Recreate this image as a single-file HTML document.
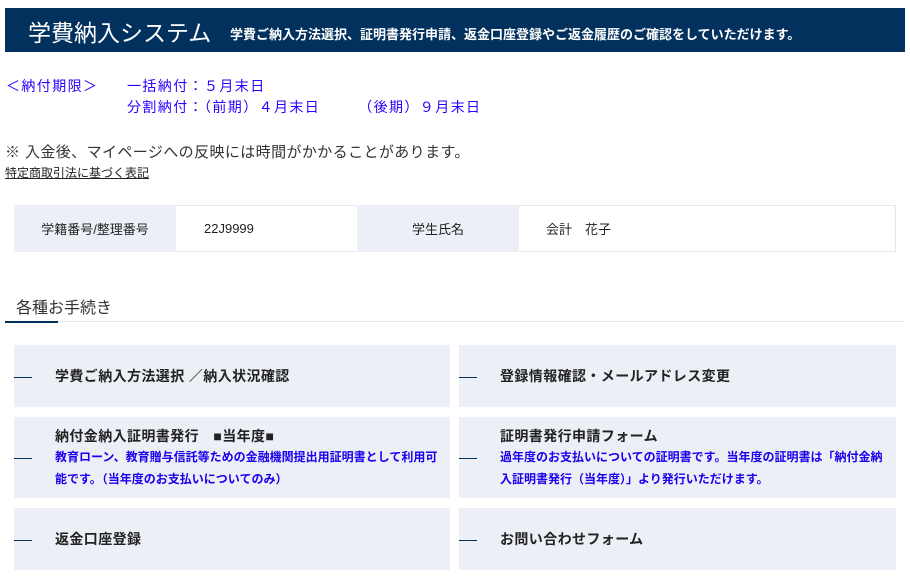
<!DOCTYPE html>
<html><head><meta charset="utf-8"><style>
*{margin:0;padding:0;box-sizing:border-box}
body{width:910px;height:588px;background:#fff;font-family:"Liberation Sans","Noto Sans CJK JP",sans-serif;position:relative;overflow:hidden;color:#222}
.a{position:absolute;white-space:nowrap}
.hdr{left:5px;top:8px;width:900px;height:44px;background:#03315e;color:#fff}
.blue{color:#2a00ff;font-size:14px;letter-spacing:1.4px}
.cell{position:absolute;top:205px;height:47px;font-size:13px;display:flex;align-items:center}
.lab{background:#ecf0f6;justify-content:center}
.card{position:absolute;background:#ecf0f6}
.dash{position:absolute;left:0;width:18px;height:1px;background:#03315e}
.t{position:absolute;left:41px;font-size:14px;font-weight:bold;color:#222;white-space:nowrap;letter-spacing:0.4px}
.d{position:absolute;left:41px;font-size:12px;font-weight:bold;color:#1a00ee;line-height:22px;width:390px}
</style></head><body>
<div class="a hdr"><span class="a" style="left:23px;top:6px;font-size:23px">学費納入システム</span><span class="a" style="left:225px;top:16px;font-size:13px;font-weight:bold">学費ご納入方法選択、証明書発行申請、返金口座登録やご返金履歴のご確認をしていただけます。</span></div>
<div class="a blue" style="left:6px;top:76px">＜納付期限＞</div>
<div class="a blue" style="left:127px;top:76px">一括納付：５月末日</div>
<div class="a blue" style="left:127px;top:97px">分割納付：（前期）４月末日<span style="display:inline-block;width:38px"></span>（後期）９月末日</div>
<div class="a" style="left:5px;top:141px;font-size:15px;color:#333;letter-spacing:0.4px">※ 入金後、マイページへの反映には時間がかかることがあります。</div>
<div class="a" style="left:5px;top:164px;font-size:12px;text-decoration:underline;color:#222">特定商取引法に基づく表記</div>
<div style="position:absolute;left:14px;top:205px;width:882px;height:47px;border:1px solid #e6e9ee"></div>
<div class="cell lab" style="left:14px;width:162px">学籍番号/整理番号</div>
<div class="cell" style="left:176px;width:181px;padding-left:28px">22J9999</div>
<div class="cell lab" style="left:357px;width:162px">学生氏名</div>
<div class="cell" style="left:519px;width:377px;padding-left:27px">会計　花子</div>
<div class="a" style="left:16px;top:294px;font-size:16px;color:#333">各種お手続き</div>
<div class="a" style="left:5px;top:321px;width:900px;height:1px;background:#e6e9ee"></div>
<div class="a" style="left:5px;top:321px;width:53px;height:2px;background:#03315e"></div>

<div class="card" style="left:14px;top:345px;width:436px;height:62px"><div class="dash" style="top:32px"></div><div class="t" style="top:21px">学費ご納入方法選択 ／納入状況確認</div></div>
<div class="card" style="left:459px;top:345px;width:437px;height:62px"><div class="dash" style="top:32px"></div><div class="t" style="top:21px">登録情報確認・メールアドレス変更</div></div>
<div class="card" style="left:14px;top:417px;width:436px;height:81px"><div class="dash" style="top:41px"></div><div class="t" style="top:9px">納付金納入証明書発行　■当年度■</div><div class="d" style="top:29px">教育ローン、教育贈与信託等ための金融機関提出用証明書として利用可能です。（当年度のお支払いについてのみ）</div></div>
<div class="card" style="left:459px;top:417px;width:437px;height:81px"><div class="dash" style="top:41px"></div><div class="t" style="top:9px">証明書発行申請フォーム</div><div class="d" style="top:29px">過年度のお支払いについての証明書です。当年度の証明書は「納付金納入証明書発行（当年度）」より発行いただけます。</div></div>
<div class="card" style="left:14px;top:508px;width:436px;height:62px"><div class="dash" style="top:32px"></div><div class="t" style="top:21px">返金口座登録</div></div>
<div class="card" style="left:459px;top:508px;width:437px;height:62px"><div class="dash" style="top:32px"></div><div class="t" style="top:21px">お問い合わせフォーム</div></div>
</body></html>
